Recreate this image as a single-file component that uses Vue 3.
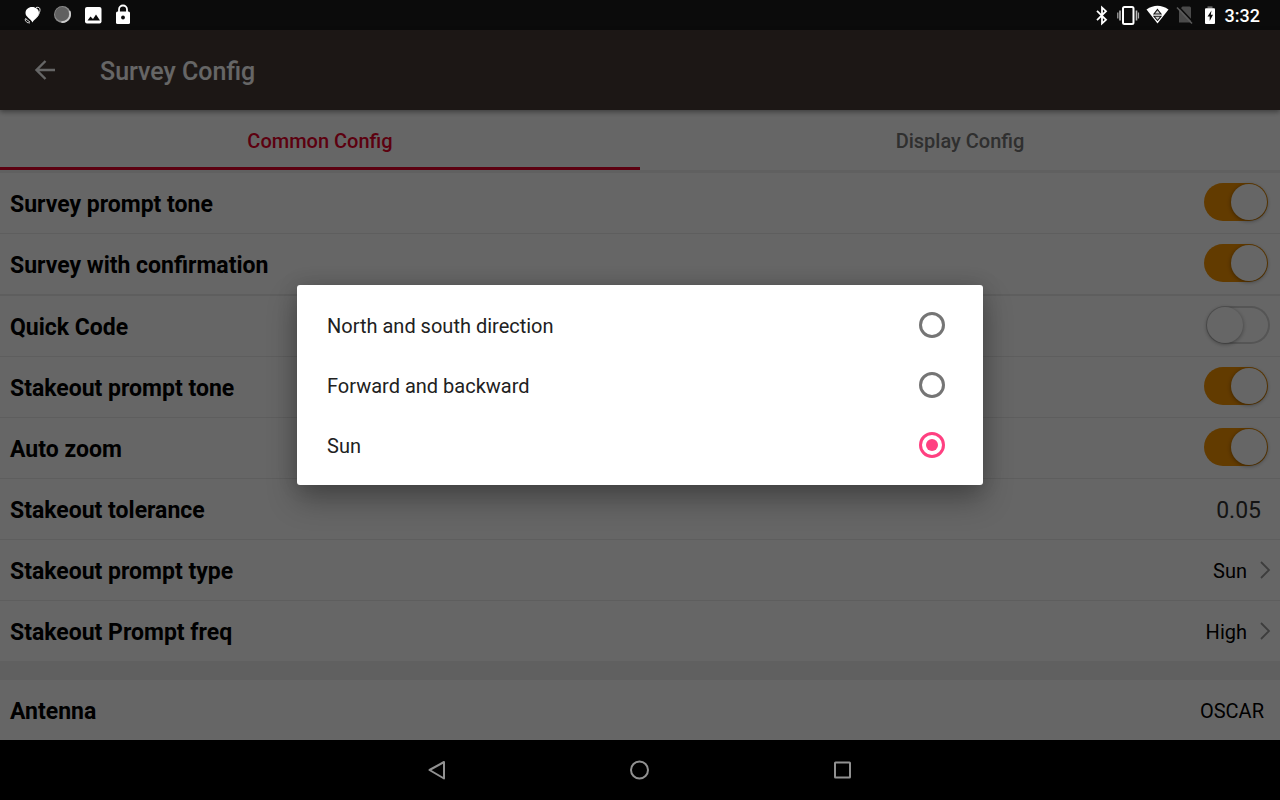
<template>
  <div class="wrap">
    <!-- status bar -->
    <header class="status_bar">
      <div class="status_left">
        <svg width="30" height="30" viewBox="0 0 30 30">
          <path
            d="M14 7c4 0 7 2.500 7 6 0 4-4.500 5.500-6.500 9.500-1.500-3.500-7-5.500-7-9.500 0-3.500 3-6 6.500-6z"
            fill="#fff"
          />
          <path
            d="M18 7.500c3-.8 4.300.5 4 3s-2 6-5.300 9"
            fill="none"
            stroke="#ddd"
          />
          <path d="M8 18l-1 2 2 2.500 3 .5M8 19l4 3" fill="none" stroke="#ccc" />
        </svg>
        <svg width="30" height="30" viewBox="0 0 30 30">
          <circle cx="14.500" cy="14.500" r="8.500" fill="#8a8a8a" />
          <path
            d="M21.500 11a8 8 0 0 1-8 11"
            fill="none"
            stroke="#ccc"
            stroke-width="1.800"
          />
          <circle cx="14" cy="14" r="7" fill="#606060" />
        </svg>
        <svg width="30" height="30" viewBox="0 0 30 30">
          <rect x="7" y="7" width="16.500" height="16.500" rx="2" fill="#fff" />
          <path
            d="M9.500 20.500l3-4 2.500 2.500 3-4.500 4 6z"
            fill="#0b0b0b"
          />
        </svg>
        <svg width="30" height="30" viewBox="0 0 30 30">
          <path
            d="M11 12V9.500a4 4 0 0 1 8 0V12"
            fill="none"
            stroke="#fff"
            stroke-width="1.800"
          />
          <rect x="8" y="11.500" width="14" height="12.500" rx="1.500" fill="#fff" />
          <circle cx="15" cy="17.500" r="1.900" fill="#0b0b0b" />
        </svg>
      </div>
      <div class="status_right">
        <svg width="26" height="30" viewBox="0 0 26 30">
          <path
            d="M8 10.800l9 9L13 23.500V7.500l4 3.700-9 9"
            fill="none"
            stroke="#fff"
            stroke-width="1.800"
          />
        </svg>
        <svg width="26" height="30" viewBox="0 0 26 30">
          <rect
            x="7"
            y="7"
            width="10.500"
            height="17"
            rx="1.500"
            fill="none"
            stroke="#fff"
            stroke-width="2"
          />
          <path d="M4 10.500v10M20.500 10.500v10" stroke="#bbb" stroke-width="1.600" />
          <path d="M1.800 12.500v6M22.500 12.500v6" stroke="#aaa" stroke-width="1.200" />
        </svg>
        <svg width="26" height="30" viewBox="0 0 26 30">
          <path d="M3.500 9.500q11-7.500 22 0L14.500 23.500z" fill="#fff" />
          <path
            d="M14.500 9.500l3.500 4.500h-7zM11 16.300h7l-3.500 4.200z"
            fill="#ccc"
            stroke="#111"
            stroke-width="1.100"
          />
        </svg>
        <svg width="26" height="30" viewBox="0 0 26 30">
          <path d="M12.500 6.500h7q1.500 0 1.500 1.500v14.500H9V10z" fill="#4a4a4a" />
          <path d="M8.500 6.500l15 16" stroke="#0b0b0b" stroke-width="1.600" />
          <path d="M7 7.500l15 16" stroke="#5a5a5a" stroke-width="1.500" />
        </svg>
        <svg width="26" height="30" viewBox="0 0 26 30">
          <rect x="10.500" y="6.300" width="5" height="2.200" fill="#666" />
          <rect x="8" y="8.300" width="10" height="15.700" rx="1" fill="#fff" />
          <path d="M14.500 10.500l-4 6h2.200v4.500l3.300-6.200h-2.200z" fill="#0b0b0b" />
        </svg>
        <span class="clock">3:32</span>
      </div>
    </header>

    <main class="screen">
      <div class="app_bar">
        <button class="back_btn" aria-label="Back">
          <svg width="24" height="24" viewBox="0 0 24 24">
            <path
              d="M22 12H4M12.500 3L3.500 12l9 9"
              fill="none"
              stroke="#fff"
              stroke-width="2.400"
            />
          </svg>
        </button>
        <h1 class="title">Survey Config</h1>
      </div>

      <nav class="tabs">
        <button
          v-for="(tab, index) in tabs"
          :key="tab"
          :class="['tab', { active: index === activeTab }]"
          @click="activeTab = index"
        >
          {{ tab }}
        </button>
      </nav>

      <!-- setting rows -->
      <section v-for="(group, index) in groups" :key="index" class="group">
        <div
          v-for="item in group"
          :key="item.id"
          :class="['row', { group_end: item.groupEnd }]"
        >
          <label class="row_label" :for="item.id">{{ item.label }}</label>
          <input
            v-if="item.type === 'switch'"
            :id="item.id"
            v-model="item.value"
            class="switch"
            type="checkbox"
          />
          <input
            v-else-if="item.type === 'number'"
            :id="item.id"
            v-model="item.value"
            class="number"
            type="text"
          />
          <button
            v-else-if="item.type === 'select'"
            :id="item.id"
            class="select_btn"
            @click="openDialog(item)"
          >
            <span class="text">{{
              item.id === 'prompt_type' ? promptType : item.value
            }}</span>
            <svg width="12" height="20" viewBox="0 0 12 20">
              <path
                d="M2 2l8 8-8 8"
                fill="none"
                stroke="#999"
                stroke-width="1.800"
              />
            </svg>
          </button>
          <output v-else :id="item.id" class="plain">{{ item.value }}</output>
        </div>
      </section>

      <!-- prompt type dialog -->
      <div v-if="dialogOpen" class="overlay" @click.self="dialogOpen = false">
        <div class="dialog" role="dialog" aria-label="Stakeout prompt type">
          <label v-for="option in promptOptions" :key="option" class="option">
            <span class="text">{{ option }}</span>
            <input
              v-model="promptType"
              class="radio"
              type="radio"
              name="prompt_type"
              :value="option"
            />
          </label>
        </div>
      </div>
    </main>

    <!-- navigation bar -->
    <footer class="nav_bar">
      <button class="nav_btn" aria-label="Back">
        <svg width="24" height="24" viewBox="0 0 24 24">
          <path d="M19 4v16.500L4.500 12z" />
        </svg>
      </button>
      <button class="nav_btn" aria-label="Home">
        <svg width="24" height="24" viewBox="0 0 24 24">
          <circle cx="11.500" cy="12" r="8.500" />
        </svg>
      </button>
      <button class="nav_btn" aria-label="Recent apps">
        <svg width="24" height="24" viewBox="0 0 24 24">
          <rect x="4" y="4.500" width="15" height="15" rx="0.500" />
        </svg>
      </button>
    </footer>
  </div>
</template>

<script setup>
import { ref } from 'vue';

const tabs = ['Common Config', 'Display Config'];
const activeTab = ref(0);

const promptOptions = [
  'North and south direction',
  'Forward and backward',
  'Sun',
];
const promptType = ref('Sun');
const dialogOpen = ref(true);

const groups = ref([
  [
    { id: 'tone', label: 'Survey prompt tone', type: 'switch', value: true },
    {
      id: 'confirm',
      label: 'Survey with confirmation',
      type: 'switch',
      value: true,
      groupEnd: true,
    },
    { id: 'quick', label: 'Quick Code', type: 'switch', value: false },
    { id: 'so_tone', label: 'Stakeout prompt tone', type: 'switch', value: true },
    { id: 'zoom', label: 'Auto zoom', type: 'switch', value: true },
    { id: 'tolerance', label: 'Stakeout tolerance', type: 'number', value: '0.05' },
    { id: 'prompt_type', label: 'Stakeout prompt type', type: 'select' },
    { id: 'freq', label: 'Stakeout Prompt freq', type: 'select', value: 'High' },
  ],
  [{ id: 'antenna', label: 'Antenna', type: 'plain', value: 'OSCAR' }],
]);

const openDialog = (item) => {
  if (item.id === 'prompt_type') {
    dialogOpen.value = true;
  }
};
</script>

<style>
body {
  margin: 0;
  background-color: #000;
}
</style>

<style scoped>
* {
  box-sizing: border-box;
}
button,
input {
  margin: 0;
  padding: 0;
  border: none;
  background: none;
  font: inherit;
  color: inherit;
}
button {
  cursor: pointer;
}
svg {
  display: block;
}
.wrap {
  display: flex;
  flex-direction: column;
  min-height: 100vh;
  font-family: Roboto, 'Liberation Sans', sans-serif;
  font-size: 20px;
  line-height: 24px;
}
/* status bar */
.status_bar {
  display: flex;
  justify-content: space-between;
  height: 30px;
  padding: 0 20px 0 18px;
  background-color: #0b0b0b;
  color: #fff;
}
.status_left,
.status_right {
  display: flex;
  align-items: center;
}
.status_right {
  gap: 1px;
}
.clock {
  padding: 2px 0 0 1px;
  font-size: 18px;
  font-weight: 500;
}
/* screen */
.screen {
  position: relative;
  flex-grow: 1;
  display: flex;
  flex-direction: column;
  background-color: #f0f0f0;
}
.app_bar {
  position: relative;
  display: flex;
  align-items: center;
  gap: 43px;
  height: 80px;
  padding-left: 33px;
  background-color: #463a36;
  box-shadow: 0 2px 5px rgba(0, 0, 0, 0.4);
  color: #fff;
}
.title {
  margin: 0;
  padding-top: 4px;
  font-size: 25px;
  line-height: 30px;
  font-weight: 500;
}
.tabs {
  display: flex;
  border-bottom: 3px solid #f0f0f0;
  background-color: #fff;
}
.tab {
  flex: 1;
  height: 60px;
  padding-top: 5px;
  border-bottom: 3px solid transparent;
  color: #757575;
  font-weight: 500;
}
.tab.active {
  border-color: #e60028;
  color: #e60028;
}
/* rows */
.group + .group {
  margin-top: 19px;
}
.row {
  display: flex;
  align-items: center;
  justify-content: space-between;
  min-height: 61px;
  padding: 0 10px;
  border-bottom: 1px solid #ebebeb;
  background-color: #fff;
}
.row.group_end {
  min-height: 62px;
  border-bottom-width: 2px;
}
.row:last-child {
  min-height: 60px;
  border-bottom: none;
}
.row_label {
  padding-top: 4px;
  font-size: 23px;
  font-weight: 700;
}
.text {
  padding-top: 2px;
}
.switch {
  appearance: none;
  display: flex;
  align-items: center;
  width: 64px;
  height: 38px;
  margin-bottom: 2px;
  border-radius: 19px;
  box-shadow: inset 0 0 0 2px #d4d4d4;
  cursor: pointer;
}
.switch::before {
  content: '';
  width: 36px;
  height: 36px;
  margin: 0 1px;
  border-radius: 50%;
  background-color: #fff;
  box-shadow: 0 1px 4px rgba(0, 0, 0, 0.4);
}
.switch:checked {
  justify-content: flex-end;
  margin-right: 2px;
  background-color: #f59300;
  box-shadow: none;
}
.number {
  width: 120px;
  padding: 4px 9px 0 0;
  color: #333;
  font-size: 23px;
  text-align: right;
}
.select_btn {
  display: flex;
  align-items: center;
  gap: 12px;
}
.select_btn svg {
  margin-right: -1px;
}
.plain {
  padding: 2px 6px 0 0;
}
/* dialog */
.overlay {
  position: absolute;
  inset: 0;
  display: flex;
  align-items: center;
  justify-content: center;
  background-color: rgba(0, 0, 0, 0.6);
}
.dialog {
  width: 54%;
  max-width: 686px;
  padding: 10px 0;
  border-radius: 3px;
  background-color: #fff;
  box-shadow: 0 15px 30px rgba(0, 0, 0, 0.3), 0 0 20px rgba(0, 0, 0, 0.15);
}
.option {
  display: flex;
  align-items: center;
  justify-content: space-between;
  height: 60px;
  padding: 0 38px 0 30px;
  color: #212121;
  cursor: pointer;
}
.radio {
  appearance: none;
  display: grid;
  place-items: center;
  width: 26px;
  height: 26px;
  border: 3px solid #757575;
  border-radius: 50%;
  cursor: pointer;
}
.radio:checked {
  border-color: #ff4081;
}
.radio:checked::before {
  content: '';
  width: 12px;
  height: 12px;
  border-radius: 50%;
  background-color: #ff4081;
}
/* navigation bar */
.nav_bar {
  display: flex;
  align-items: center;
  justify-content: center;
  gap: 143px;
  height: 60px;
  background-color: #000;
}
.nav_btn {
  display: flex;
  align-items: center;
  justify-content: center;
  width: 60px;
  height: 60px;
}
.nav_btn svg {
  fill: none;
  stroke: #919191;
  stroke-width: 2;
  stroke-linejoin: round;
}
</style>
